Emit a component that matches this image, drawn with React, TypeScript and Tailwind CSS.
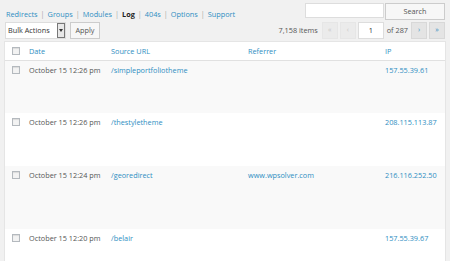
import React from 'react'

const font = { fontFamily: '"Open Sans", "Liberation Sans", sans-serif' }

const tabs = ['Redirects', 'Groups', 'Modules', 'Log', '404s', 'Options', 'Support']

const rows = [
  { date: 'October 15 12:26 pm', url: '/simpleportfoliotheme', ref: '', ip: '157.55.39.61', h: 'h-[52px]' },
  { date: 'October 15 12:26 pm', url: '/thestyletheme', ref: '', ip: '208.115.113.87', h: 'h-[53px]' },
  { date: 'October 15 12:24 pm', url: '/georedirect', ref: 'www.wpsolver.com', ip: '216.116.252.50', h: 'h-[63px]' },
  { date: 'October 15 12:20 pm', url: '/belair', ref: '', ip: '157.55.39.67', h: 'h-[40px]' },
]

function Check() {
  return <span className="block w-[8px] h-[8px] border border-[#b4b9be] bg-[#f3f3f3] shadow-[inset_0_1px_1px_rgba(0,0,0,0.1)]" />
}

function PageBtn({ label, active }: { label: string; active?: boolean }) {
  return (
    <span
      className={
        active
          ? 'flex items-center justify-center w-[16px] h-[17px] bg-[#e4e4e4] border border-[#d8d8d8] text-[#2e8ec2] text-[7px]'
          : 'flex items-center justify-center w-[16px] h-[17px] bg-[#ebebeb] border border-[#e6e6e6] text-[#c8c8c8] text-[7px]'
      }
    >
      {label}
    </span>
  )
}

export default function App() {
  return (
    <div className="w-[450px] h-[261px] bg-[#f1f1f1] overflow-hidden text-[7.3px] text-[#555]" style={font}>
      <div className="flex justify-between items-start pt-[3px] pr-[5px]">
        <div className="flex items-center pl-[6px] pt-[6px]">
          {tabs.map((t, i) => (
            <span key={t} className="flex items-center">
              {i > 0 && <span className="px-[3px] text-[#aaa]">|</span>}
              <span className={t === 'Log' ? 'font-bold text-[#222]' : 'text-[#2e8ec2]'}>{t}</span>
            </span>
          ))}
        </div>
        <div className="flex items-start">
          <span className="block w-[79px] h-[15px] bg-white border border-[#ddd]" />
          <span className="ml-[1px] flex items-center justify-center w-[60px] h-[17px] bg-[#f7f7f7] border border-[#ccc] text-[#555]">
            Search
          </span>
        </div>
      </div>

      <div className="flex justify-between items-center mt-[2px] pl-[5px] pr-[5px]">
        <div className="flex items-center">
          <span className="flex items-center w-[61px] h-[17px] bg-white border border-[#ddd] text-[#333]">
            <span className="flex-1 pl-[2px]">Bulk Actions</span>
            <span className="flex items-center justify-center w-[8px] h-[15px] bg-[#e8e8e8] border border-[#777]">
              <span className="block w-0 h-0 border-l-[2px] border-r-[2px] border-t-[3px] border-l-transparent border-r-transparent border-t-[#333]" />
            </span>
          </span>
          <span className="ml-[4px] flex items-center justify-center w-[30px] h-[17px] bg-[#f7f7f7] border border-[#ccc] text-[#555]">
            Apply
          </span>
        </div>
        <div className="flex items-center">
          <span className="mr-[4px] text-[#555]">7,158 items</span>
          <PageBtn label="«" />
          <span className="ml-[2px]"><PageBtn label="‹" /></span>
          <span className="ml-[2px] flex items-center justify-center w-[26px] h-[17px] bg-white border border-[#ddd] text-[#333]">1</span>
          <span className="ml-[3px] mr-[3px]">of 287</span>
          <PageBtn label="›" active />
          <span className="ml-[2px]"><PageBtn label="»" active /></span>
        </div>
      </div>

      <div className="mt-[2px] ml-[4px] w-[442px] bg-white border border-[#e5e5e5]">
        <div className="flex items-center h-[19px] border-b border-[#e1e1e1] text-[#2e8ec2]">
          <span className="w-[24px] pl-[7px]"><Check /></span>
          <span className="w-[82px]">Date</span>
          <span className="w-[137px]">Source URL</span>
          <span className="w-[137px]">Referrer</span>
          <span>IP</span>
        </div>
        {rows.map((r, i) => (
          <div key={i} className={`flex items-start pt-[4px] ${r.h} ${i % 2 === 0 ? 'bg-[#f9f9f9]' : 'bg-white'}`}>
            <span className="w-[24px] pl-[7px] pt-[1px]"><Check /></span>
            <span className="w-[82px] text-[#555]">{r.date}</span>
            <span className="w-[137px] text-[#2e8ec2]">{r.url}</span>
            <span className="w-[137px] text-[#2e8ec2]">{r.ref}</span>
            <span className="text-[#2e8ec2]">{r.ip}</span>
          </div>
        ))}
      </div>
    </div>
  )
}
